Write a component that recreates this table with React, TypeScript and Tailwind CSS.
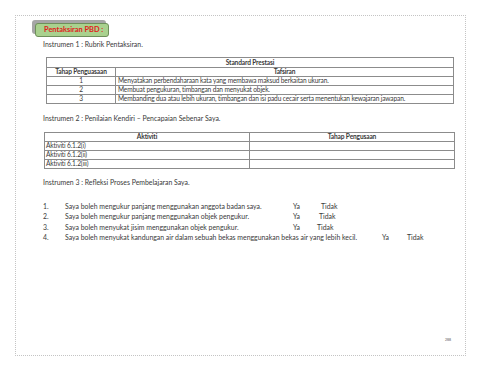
const items = [
  { text: 'Saya boleh mengukur panjang menggunakan anggota badan saya.', ya: 'w-[228px]', tidak: 'w-[28px]' },
  { text: 'Saya boleh mengukur panjang menggunakan objek pengukur.', ya: 'w-[228px]', tidak: 'w-[26px]' },
  { text: 'Saya boleh menyukat jisim menggunakan objek pengukur.', ya: 'w-[228px]', tidak: 'w-[24px]' },
  { text: 'Saya boleh menyukat kandungan air dalam sebuah bekas menggunakan bekas air yang lebih kecil.', ya: 'w-[317px]', tidak: 'w-[25px]' },
];

const rubrik = [
  'Menyatakan perbendaharaan kata yang membawa maksud berkaitan ukuran.',
  'Membuat pengukuran, timbangan dan menyukat objek.',
  'Membanding dua atau lebih ukuran, timbangan dan isi padu cecair serta menentukan kewajaran jawapan.',
];

export default function App() {
  const cell = 'border border-[#8c8c8c] h-[9px] leading-[7px] pt-0 pb-[1px] px-0 align-middle text-[6.6px] tracking-[-0.15px]';

  return (
    <div className="w-[480px] h-[371px] bg-white pt-[15px] pl-[15px] text-[6.9px] text-[#3a3a3a] font-['Lato','Open_Sans',sans-serif]">
      <div className="w-[451px] h-[341px] border border-dotted border-[#c4c4c4] flex flex-col">
        {/* badge */}
        <div className="relative ml-[19px] mt-[7px] w-[74px] h-[14px]">
          <div className="absolute -left-[3px] -top-[3px] w-[74px] h-[14px] rounded-[3px] bg-[#a6a6a6]" />
          <div className="absolute inset-0 rounded-[3px] bg-[#a9d18e] border border-[#6e8f5a] flex items-center pl-[8px] text-[7.4px] text-[#e0201b] font-bold">
            Pentaksiran PBD :
          </div>
        </div>

        <p className="ml-[27px] mt-[3px] h-[8px] leading-[8px]">Instrumen 1 : Rubrik Pentaksiran.</p>

        <table className="ml-[30px] mt-[9px] w-[408px] border-collapse">
          <tbody>
            <tr>
              <td colSpan={2} className={`${cell} h-[10px] text-center font-bold`}>Standard Prestasi</td>
            </tr>
            <tr>
              <td className={`${cell} w-[69px] text-center font-bold`}>Tahap Penguasaan</td>
              <td className={`${cell} text-center font-bold`}>Tafsiran</td>
            </tr>
            {rubrik.map((r, i) => (
              <tr key={i}>
                <td className={`${cell} text-center`}>{i + 1}</td>
                <td className={`${cell} pl-[2px]`}>{r}</td>
              </tr>
            ))}
          </tbody>
        </table>

        <p className="ml-[27px] mt-[10px] h-[8px] leading-[8px]">
          Instrumen 2 : Penilaian Kendiri – Pencapaian Sebenar Saya.
        </p>

        <table className="ml-[28px] mt-[10px] w-[411px] border-collapse">
          <tbody>
            <tr>
              <td className={`${cell} w-[205px] text-center font-bold`}>Aktiviti</td>
              <td className={`${cell} text-center font-bold`}>Tahap Pengusaan</td>
            </tr>
            {['Aktiviti 6.1.2(i)', 'Aktiviti 6.1.2(ii)', 'Aktiviti 6.1.2(iii)'].map((a) => (
              <tr key={a}>
                <td className={`${cell} pl-[1px]`}>{a}</td>
                <td className={cell}></td>
              </tr>
            ))}
          </tbody>
        </table>

        <p className="ml-[27px] mt-[9px] h-[8px] leading-[8px]">Instrumen 3 : Refleksi Proses Pembelajaran Saya.</p>

        <div className="ml-[27px] mt-[16px] flex flex-col gap-[2.3px]">
          {items.map((it, i) => (
            <div key={i} className="flex h-[8px] leading-[8px] whitespace-nowrap">
              <span className="w-[22px] shrink-0">{i + 1}.</span>
              <span className={`${it.ya} shrink-0`}>{it.text}</span>
              <span className={`${it.tidak} shrink-0`}>Ya</span>
              <span className="shrink-0">Tidak</span>
            </div>
          ))}
        </div>

        <div className="mt-auto mb-[12px] mr-[14px] text-right text-[4px] leading-[6px] font-['Liberation_Serif',serif]">
          288
        </div>
      </div>
    </div>
  );
}
